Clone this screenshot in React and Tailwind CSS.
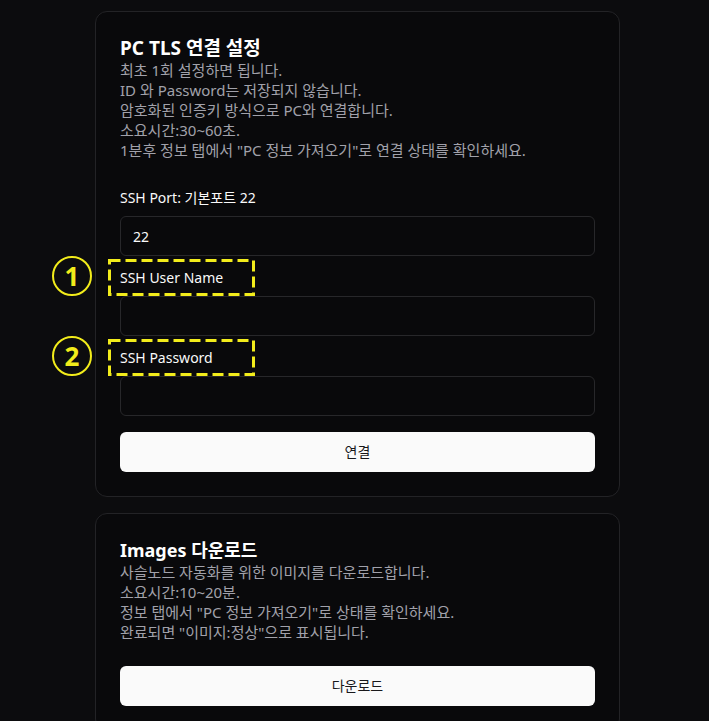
import { useState } from 'react'

function Marker({ num }) {
  return (
    <>
      <div className="absolute left-[-68px] top-[-12px] w-[40px] h-[40px] rounded-full border-2 border-[#f2ec1b] flex items-center justify-center text-[#f2ec1b] text-[26px] font-bold leading-none">
        {num}
      </div>
      <svg className="absolute left-[-12px] top-[-9px]" width="147" height="37" viewBox="0 0 147 37">
        <rect x="1.5" y="1.5" width="144" height="34" fill="none" stroke="#f2ec1b" strokeWidth="3" strokeDasharray="11 5" />
      </svg>
    </>
  )
}

function Field({ label, value, marker, first }) {
  const [v, setV] = useState(value || '')
  return (
    <div className={first ? 'mt-7' : 'mt-3'}>
      <div className="relative text-sm leading-5 text-[#fafafa]">
        {marker && <Marker num={marker} />}
        <span className="relative">{label}</span>
      </div>
      <input
        value={v}
        onChange={e => setV(e.target.value)}
        className="mt-2 w-full h-10 rounded-md border border-[#27272a] bg-transparent px-3 text-sm text-[#fafafa] focus:outline-none"
      />
    </div>
  )
}

export default function App() {
  return (
    <div className="min-h-screen bg-[#0c0c0e] pt-[11px] flex justify-center" style={{ fontFamily: '"Noto Sans", "Noto Sans CJK KR", sans-serif' }}>
      <div className="w-[525px] flex flex-col gap-4 translate-x-[3px]">
        <div className="rounded-xl border border-[#232326] bg-[#09090b] p-6">
          <h2 className="text-[19px] leading-6 font-bold text-white">PC TLS 연결 설정</h2>
          <div className="text-[15px] leading-5 text-[#a1a1aa]">
            <p>최초 1회 설정하면 됩니다.</p>
            <p>ID 와 Password는 저장되지 않습니다.</p>
            <p>암호화된 인증키 방식으로 PC와 연결합니다.</p>
            <p>소요시간:30~60초.</p>
            <p>1분후 정보 탭에서 "PC 정보 가져오기"로 연결 상태를 확인하세요.</p>
          </div>
          <Field label="SSH Port: 기본포트 22" value="22" first />
          <Field label="SSH User Name" marker="1" />
          <Field label="SSH Password" marker="2" />
          <button className="mt-4 w-full h-10 rounded-md bg-[#fafafa] text-sm text-[#18181b]">연결</button>
        </div>

        <div className="rounded-xl border border-[#232326] bg-[#09090b] p-6">
          <h2 className="text-lg leading-6 font-bold text-white">Images 다운로드</h2>
          <div className="text-[15px] leading-5 text-[#a1a1aa]">
            <p>사슬노드 자동화를 위한 이미지를 다운로드합니다.</p>
            <p>소요시간:10~20분.</p>
            <p>정보 탭에서 "PC 정보 가져오기"로 상태를 확인하세요.</p>
            <p>완료되면 "이미지:정상"으로 표시됩니다.</p>
          </div>
          <button className="mt-6 w-full h-10 rounded-md bg-[#fafafa] text-sm text-[#18181b]">다운로드</button>
        </div>
      </div>
    </div>
  )
}
